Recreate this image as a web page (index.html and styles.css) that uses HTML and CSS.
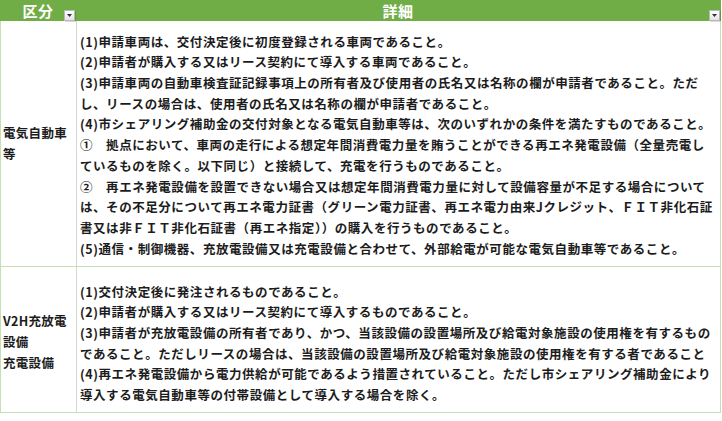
FILE: index.html
```html
<!DOCTYPE html>
<html lang="ja">
<head>
<meta charset="utf-8">
<link rel="stylesheet" href="styles.css">
</head>
<body>
<div class="sheet">
  <div class="hd hd-left">
    <span class="hd-text">区分</span>
    <span class="dd"><svg width="5" height="4" viewBox="0 0 5 4"><polygon points="0,0 5,0 2.5,3" fill="#333"/></svg></span>
  </div>
  <div class="hd hd-right">
    <span class="hd-text">詳細</span>
    <span class="dd"><svg width="5" height="4" viewBox="0 0 5 4"><polygon points="0,0 5,0 2.5,3" fill="#333"/></svg></span>
  </div>

  <div class="cell cat row1">
    <p>電気自動車</p>
    <p>等</p>
  </div>
  <div class="cell det row1">
    <p>(1)申請車両は、交付決定後に初度登録される車両であること。</p>
    <p>(2)申請者が購入する又はリース契約にて導入する車両であること。</p>
    <p>(3)申請車両の自動車検査証記録事項上の所有者及び使用者の氏名又は名称の欄が申請者であること。ただ</p>
    <p>し、リースの場合は、使用者の氏名又は名称の欄が申請者であること。</p>
    <p>(4)市シェアリング補助金の交付対象となる電気自動車等は、次のいずれかの条件を満たすものであること。</p>
    <p>①　拠点において、車両の走行による想定年間消費電力量を賄うことができる再エネ発電設備（全量売電し</p>
    <p>ているものを除く。以下同じ）と接続して、充電を行うものであること。</p>
    <p>②　再エネ発電設備を設置できない場合又は想定年間消費電力量に対して設備容量が不足する場合について</p>
    <p>は、その不足分について再エネ電力証書（グリーン電力証書、再エネ電力由来Jクレジット、ＦＩＴ非化石証</p>
    <p>書又は非ＦＩＴ非化石証書（再エネ指定））の購入を行うものであること。</p>
    <p>(5)通信・制御機器、充放電設備又は充電設備と合わせて、外部給電が可能な電気自動車等であること。</p>
  </div>

  <div class="cell cat row2">
    <p>V2H充放電</p>
    <p>設備</p>
    <p>充電設備</p>
  </div>
  <div class="cell det row2">
    <p>(1)交付決定後に発注されるものであること。</p>
    <p>(2)申請者が購入する又はリース契約にて導入するものであること。</p>
    <p>(3)申請者が充放電設備の所有者であり、かつ、当該設備の設置場所及び給電対象施設の使用権を有するもの</p>
    <p>であること。ただしリースの場合は、当該設備の設置場所及び給電対象施設の使用権を有する者であること</p>
    <p>(4)再エネ発電設備から電力供給が可能であるよう措置されていること。ただし市シェアリング補助金により</p>
    <p>導入する電気自動車等の付帯設備として導入する場合を除く。</p>
    <span class="handle"></span>
  </div>
</div>
</body>
</html>
```

FILE: styles.css
```css
* { box-sizing: border-box; }
html, body { margin: 0; padding: 0; background: #ffffff; }
body {
  font-family: "Noto Sans CJK JP", "Noto Sans", sans-serif;
  color: #1c1c1c;
}
.sheet {
  width: 721px;
  display: grid;
  grid-template-columns: 77px 644px;
}
.hd {
  position: relative;
  height: 21px;
  background: #70ad47;
  color: #ffffff;
  font-weight: 700;
  font-size: 15px;
  line-height: 21px;
  text-align: center;
  letter-spacing: 0.5px;
}
.hd-left { padding-right: 1px; }
.hd-right { padding-right: 2px; }
.hd-text { display: inline-block; }
.dd {
  position: absolute;
  right: 2px;
  bottom: 0;
  width: 11px;
  height: 11px;
  background: linear-gradient(#ffffff, #e3e3e3);
  border: 1px solid #b8b8b8;
  display: flex;
  align-items: center;
  justify-content: center;
  box-shadow: 1px 1px 0 rgba(0,0,0,0.15);
}
.hd-right .dd { right: 1px; }
.cell {
  border-bottom: 1px solid #c5e0b3;
  font-weight: 700;
  font-size: 12.5px;
  letter-spacing: 0.55px;
  white-space: nowrap;
}
.cell p { margin: 0; }
.cat {
  border-left: 1px solid #c5e0b3;
  border-right: 1px solid #d3d8d0;
  padding-left: 2px;
  display: flex;
  flex-direction: column;
  justify-content: center;
  line-height: 21px;
  letter-spacing: 0.3px;
}
.det {
  position: relative;
  border-right: 1px solid #c5e0b3;
  padding-left: 3px;
  line-height: 20.7px;
}
.row1 { height: 246px; }
.det.row1 { padding-top: 10.6px; }
.row2 { height: 146px; }
.det.row2 { padding-top: 14.6px; }
.cat.row1 { padding-bottom: 2px; }
.cat.row2 { padding-top: 4px; }
.handle {
  position: absolute;
  right: -2px;
  bottom: -5px;
  width: 0;
  height: 0;
  border-left: 4px solid transparent;
  border-bottom: 4px solid #2f5597;
}
```
